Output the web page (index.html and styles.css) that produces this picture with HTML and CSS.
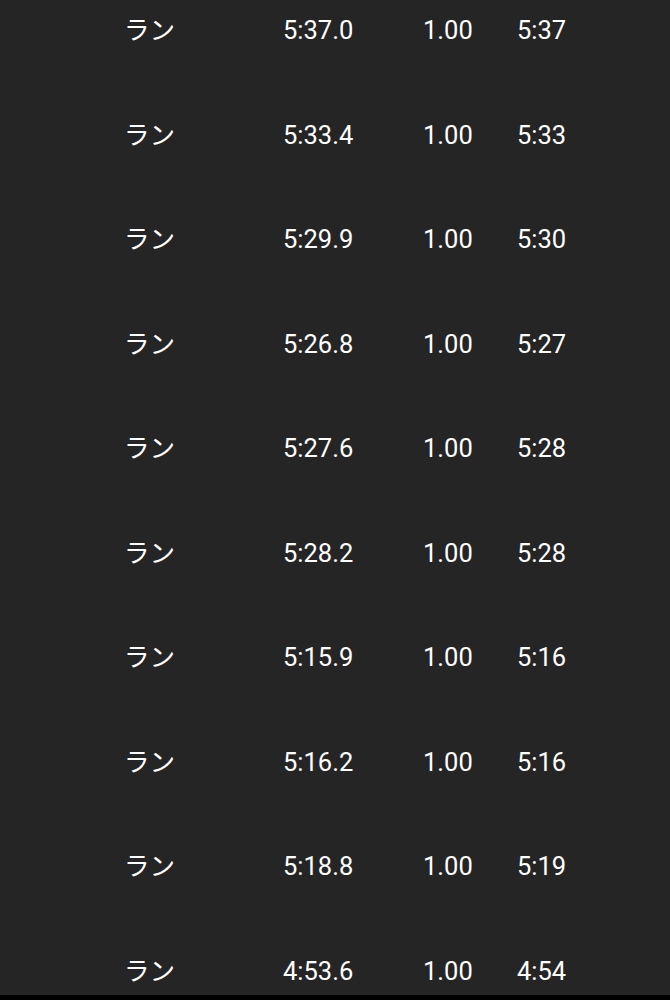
FILE: index.html
```html
<!DOCTYPE html>
<html lang="ja">
<head>
<meta charset="utf-8">
<link rel="stylesheet" href="styles.css">
</head>
<body>
<main class="list">
  <div class="row"><span class="type">ラン</span><span class="time">5:37.0</span><span class="dist">1.00</span><span class="pace">5:37</span></div>
  <div class="row"><span class="type">ラン</span><span class="time">5:33.4</span><span class="dist">1.00</span><span class="pace">5:33</span></div>
  <div class="row"><span class="type">ラン</span><span class="time">5:29.9</span><span class="dist">1.00</span><span class="pace">5:30</span></div>
  <div class="row"><span class="type">ラン</span><span class="time">5:26.8</span><span class="dist">1.00</span><span class="pace">5:27</span></div>
  <div class="row"><span class="type">ラン</span><span class="time">5:27.6</span><span class="dist">1.00</span><span class="pace">5:28</span></div>
  <div class="row"><span class="type">ラン</span><span class="time">5:28.2</span><span class="dist">1.00</span><span class="pace">5:28</span></div>
  <div class="row"><span class="type">ラン</span><span class="time">5:15.9</span><span class="dist">1.00</span><span class="pace">5:16</span></div>
  <div class="row"><span class="type">ラン</span><span class="time">5:16.2</span><span class="dist">1.00</span><span class="pace">5:16</span></div>
  <div class="row"><span class="type">ラン</span><span class="time">5:18.8</span><span class="dist">1.00</span><span class="pace">5:19</span></div>
  <div class="row"><span class="type">ラン</span><span class="time">4:53.6</span><span class="dist">1.00</span><span class="pace">4:54</span></div>
</main>
<div class="bottom-bar"></div>
</body>
</html>
```
FILE: styles.css
```css
html, body {
  margin: 0;
  padding: 0;
  background: #000;
}
body {
  height: 1000px;
  display: flex;
  flex-direction: column;
  overflow: hidden;
  font-family: Roboto, "Noto Sans CJK JP", sans-serif;
  color: #ffffff;
}
.list {
  flex: 1;
  min-height: 0;
  overflow: hidden;
  background: #252525;
}
.row {
  height: 104.56px;
  box-sizing: border-box;
  padding: 13px 0 0 124px;
  display: flex;
  align-items: baseline;
  font-size: 25.5px;
  line-height: 30px;
}
.type {
  width: 159px;
  font-family: "Noto Sans CJK JP", sans-serif;
}
.time {
  width: 140px;
}
.dist {
  width: 94px;
}
.bottom-bar {
  height: 5px;
  flex: none;
  background: #000;
}
```
